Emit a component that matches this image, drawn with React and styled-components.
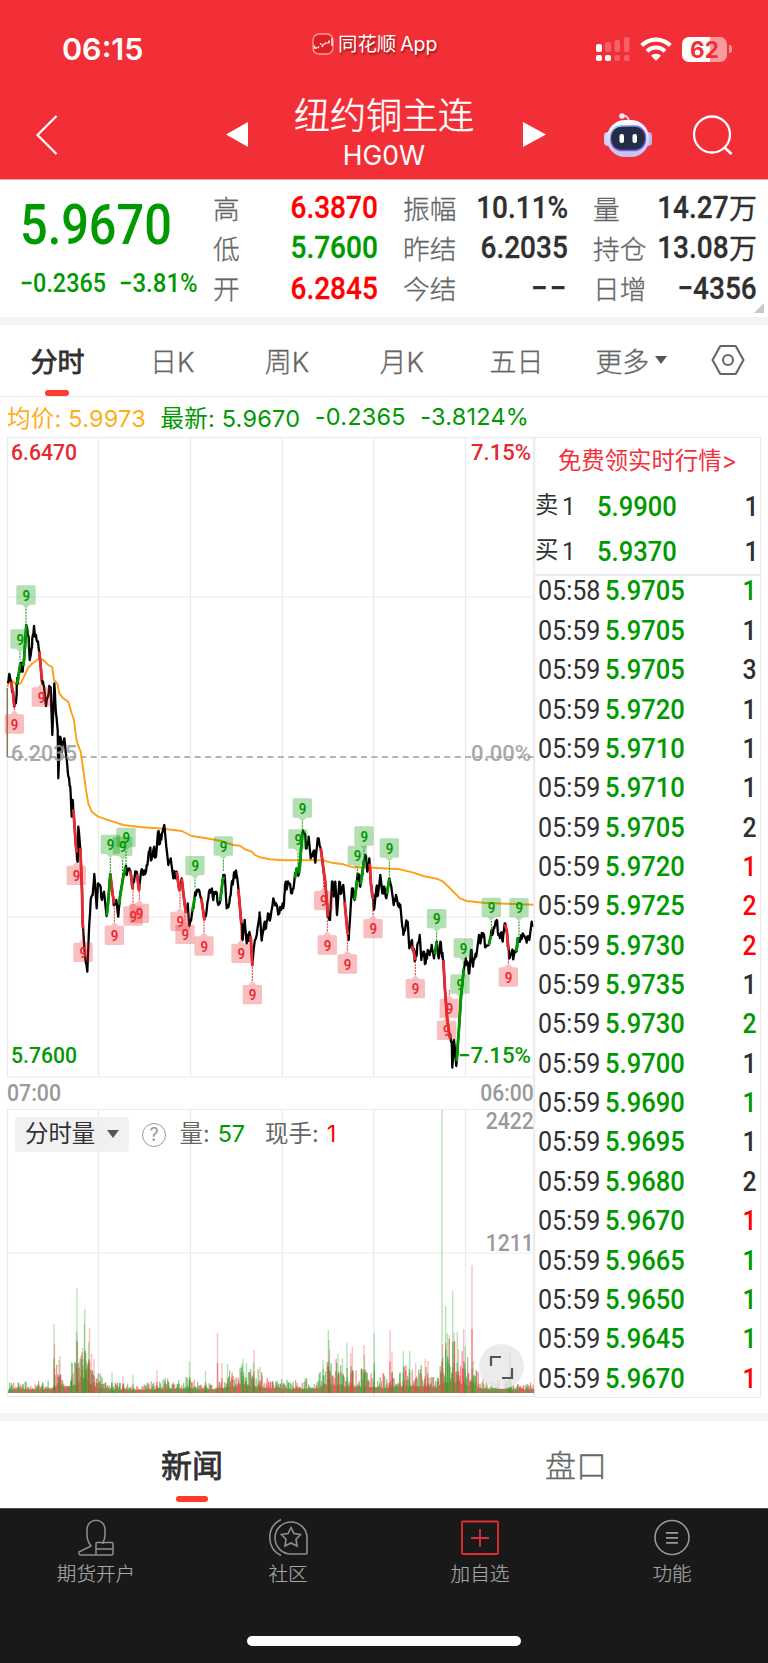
import React from "react";
import styled, { createGlobalStyle } from "styled-components";

const C = {
  red: "#f22f37",
  up: "#ff0000",
  down: "#009900",
  text: "#303030",
  label: "#666666",
  faint: "#999999",
  line: "#ebebeb",
  band: "#f4f4f4",
};

const Global = createGlobalStyle`
  * { box-sizing: border-box; }
  body { margin: 0; background: #fff; }
`;

const Page = styled.div`
  width: 768px;
  height: 1663px;
  overflow: hidden;
  display: flex;
  flex-direction: column;
  background: #fff;
  color: ${C.text};
  font-family: Inter, "Noto Sans CJK SC", sans-serif;
`;

const Num = styled.span`
  display: inline-block;
  font-family: Roboto, sans-serif;
  font-weight: ${(p) => p.$weight || 500};
  font-size: ${(p) => p.$size}px;
  letter-spacing: ${(p) => p.$ls || 0}px;
  line-height: 1;
  white-space: nowrap;
  color: ${(p) => p.$color || C.text};
  transform: scaleX(${(p) => p.$sx || 1});
  transform-origin: ${(p) => p.$origin || "left"} center;
`;

/* ---------- header ---------- */
const Header = styled.header`
  flex: none;
  height: 180px;
  background: ${C.red};
  border-bottom: 1px solid #fba9ac;
  color: #fff;
`;
const StatusBar = styled.div`
  height: 90px;
  display: flex;
  align-items: flex-start;
  padding: 30px 0 0 62px;
`;
const Clock = styled.div`
  width: 250px;
  font-size: 30.5px;
  line-height: 37px;
  font-weight: 600;
`;
const AppTag = styled.div`
  width: 284px;
  padding-top: 2px;
  display: flex;
  align-items: center;
  gap: 4px;
  font-size: 19.4px;
  word-spacing: -1.5px;
  line-height: 24px;
  text-shadow: 1px 2px 2px rgba(90, 0, 0, 0.6);
  white-space: nowrap;
`;
const StatusIcons = styled.div`
  display: flex;
  align-items: center;
  gap: 10px;
  height: 38px;
`;
const Battery = styled.div`
  position: relative;
  width: 45px;
  height: 25px;
  border-radius: 7px;
  background: linear-gradient(90deg, #fff 62%, #f99a9e 62%);
  color: ${C.red};
  font-size: 22.5px;
  font-weight: 700;
  line-height: 25px;
  text-align: center;
  &::after {
    content: "";
    position: absolute;
    right: -5px;
    top: 8px;
    width: 3px;
    height: 8px;
    border-radius: 0 3px 3px 0;
    background: #f99a9e;
  }
`;
const NavRow = styled.div`
  height: 89px;
  display: flex;
  align-items: center;
  svg { display: block; flex: none; }
`;
const NavSlot = styled.div`
  width: ${(p) => p.$w}px;
  padding-left: ${(p) => p.$pl || 0}px;
`;
const Title = styled.div`
  width: 236px;
  display: flex;
  flex-direction: column;
  align-items: center;
  font-family: "Noto Sans CJK SC", sans-serif;
  font-weight: 300;
  font-size: 36px;
  line-height: 44px;
  -webkit-text-stroke: 0.5px;
`;
const SubTitle = styled.div`
  font-family: Inter, sans-serif;
  font-size: 26.5px;
  font-weight: 400;
  line-height: 40px;
  padding-bottom: 3px;
  -webkit-text-stroke: 0;
`;

/* ---------- quote ---------- */
const Quote = styled.section`
  position: relative;
  flex: none;
  height: 137px;
  display: flex;
  padding: 7px 11px 0 0;
`;
const PriceBlock = styled.div`
  width: 213px;
  padding: 11px 0 0 20px;
`;
const BigPrice = styled.div`
  height: 73px;
`;
const Changes = styled.div`
  display: grid;
  grid-template-columns: 99px 1fr;
`;
const StatColumn = styled.div`
  width: ${(p) => p.$w}px;
  margin-right: ${(p) => p.$mr || 0}px;
`;
const Stat = styled.div`
  height: 40.3px;
  display: flex;
  align-items: center;
  justify-content: space-between;
  font-size: 26.7px;
  font-weight: 300;
  -webkit-text-stroke: 0.3px;
  color: ${C.label};
  white-space: nowrap;
`;
const StatValue = styled.span`
  display: flex;
  align-items: center;
  justify-content: flex-end;
  flex: 1;
  width: 0;
  color: ${C.text};
  font-size: 28px;
  font-weight: 400;
`;
const Corner = styled.i`
  position: absolute;
  right: 4px;
  bottom: 4px;
  border-left: 10px solid transparent;
  border-bottom: 10px solid #c8c8c8;
`;
const Band = styled.div`
  flex: none;
  height: 8px;
  background: ${C.band};
`;

/* ---------- period tabs ---------- */
const Tabs = styled.nav`
  flex: none;
  height: 72px;
  display: flex;
  border-bottom: 1px solid ${C.line};
`;
const Tab = styled.div`
  position: relative;
  width: ${(p) => p.$w || 114.8}px;
  display: flex;
  align-items: center;
  justify-content: center;
  gap: 6px;
  padding-bottom: 1px;
  font-size: 27px;
  font-weight: ${(p) => (p.$on ? 400 : 300)};
  -webkit-text-stroke: ${(p) => (p.$on ? "0.8px" : "0.3px")};
  color: ${(p) => (p.$on ? C.text : C.label)};
  &::after {
    content: "";
    display: ${(p) => (p.$on ? "block" : "none")};
    position: absolute;
    bottom: 0;
    width: 24px;
    height: 6px;
    border-radius: 3px;
    background: #ff3b30;
  }
`;
const Caret = styled.i`
  border: ${(p) => p.$s || 6}px solid transparent;
  border-top: 8px solid #555;
  border-bottom: 0;
`;
const Summary = styled.div`
  flex: none;
  height: 40px;
  display: flex;
  align-items: center;
  gap: 14.5px;
  padding: 0 0 1px 7px;
  font-size: 23.5px;
  letter-spacing: 0.22px;
  color: ${C.down};
  white-space: nowrap;
`;
const Avg = styled.span`
  color: #ffae1a;
`;

/* ---------- chart and ticks ---------- */
const Main = styled.section`
  flex: none;
  height: 976px;
  display: flex;
`;
const ChartBox = styled.div`
  position: relative;
  width: 535px;
  height: 961px;
  svg { display: block; overflow: visible; }
`;
const VolumeBar = styled.div`
  position: absolute;
  left: 15px;
  top: 680px;
  height: 35px;
  display: flex;
  align-items: center;
  font-size: 23.4px;
  line-height: 33px;
  color: ${C.label};
  white-space: nowrap;
`;
const Pill = styled.div`
  width: 114px;
  height: 35px;
  display: flex;
  align-items: center;
  gap: 12px;
  padding: 0 0 2px 10px;
  margin-right: 13px;
  border-radius: 4px;
  background: rgba(238, 238, 238, 0.85);
  color: ${C.text};
`;
const Help = styled.div`
  width: 24px;
  height: 24px;
  border: 1.5px solid ${C.faint};
  border-radius: 50%;
  font-size: 18px;
  line-height: 21px;
  text-align: center;
  color: ${C.faint};
  margin-right: 13.5px;
`;
const VolText = styled.span`
  display: flex;
  align-items: baseline;
  gap: 8px;
  margin-right: 20px;
  padding-bottom: 3px;
  b { font-weight: 400; color: ${(p) => p.$c}; }
`;
const Expand = styled.div`
  position: absolute;
  left: 479px;
  top: 907px;
  width: 45px;
  height: 45px;
  border-radius: 50%;
  background: rgba(232, 232, 232, 0.85);
`;
const Ticks = styled.aside`
  width: 226px;
  height: 961px;
  border: 1px solid ${C.line};
  border-left: 0;
`;
const Promo = styled.div`
  height: 46px;
  text-align: center;
  color: #f5303a;
  font-size: 23.4px;
  line-height: 46px;
`;
const Book = styled.div`
  height: 92px;
  padding-right: 1px;
  border-bottom: 2px solid ${C.line};
`;
const BookRow = styled.div`
  height: 45px;
  display: grid;
  grid-template-columns: 27px 35px 1fr auto;
  align-items: center;
  font-size: 23.4px;
  line-height: 32px;
`;
const Side = styled.span`
  padding-bottom: 3px;
`;
const TickList = styled.div`
  margin-top: -4.5px;
  padding-right: 3px;
`;
const TickRow = styled.div`
  height: 39.37px;
  display: grid;
  grid-template-columns: 66.5px 1fr auto;
  align-items: center;
  padding-left: 3px;
`;

/* ---------- bottom ---------- */
const NewsTabs = styled(Tabs)`
  height: 87px;
  border: 0;
`;
const NewsTab = styled(Tab)`
  width: 384px;
  padding-bottom: 3px;
  font-size: 31px;
  &::after { width: 32px; bottom: 6px; }
`;
const BottomNav = styled.footer`
  flex: none;
  height: 155px;
  border-top: 1px solid #4a4e4c;
  background: #191919;
  display: flex;
  flex-wrap: wrap;
  justify-content: center;
  align-content: flex-start;
`;
const NavItem = styled.div`
  width: 192px;
  height: 110px;
  padding-top: 8px;
  display: flex;
  flex-direction: column;
  align-items: center;
  font-size: 19.6px;
  font-weight: 300;
  -webkit-text-stroke: 0.2px;
  line-height: 30px;
  color: #a5a5a5;
  svg { display: block; margin-bottom: 2px; }
`;
const HomeBar = styled.div`
  width: 274px;
  height: 10px;
  margin-top: 17px;
  border-radius: 5px;
  background: #fff;
`;

/* ---------- chart data, sampled at three units per pixel ---------- */
const morning = "24,340 28,312 33,335 38,360 43,410 50,370 50,350 55,320 61,280 68,305 72,270 79,165 86,200 89,270 94,240 97,205 102,168 106,200 112,215 118,245 123,300 127,340 132,350 138,408 146,370 152,352 157,495 163,340 168,430 173,480 175,625 180,500 186,545 193,505 199,560 205,620 211,650 215,740 218,690 221,732 228,830 233,875 235,770 241,835 246,960 248,1060 253,1130 258,1180 262,1205 266,1100 272,990 278,975 283,912 290,1015 294,940 300,945 306,990 312,965 320,1038 325,990 331,912 338,975 343,1000 349,990 355,1040 360,980 368,930 376,895 382,905 388,895 392,910 398,955 404,920 410,905 417,960 423,905 430,915 438,905 444,870 450,835 454,870 460,840 468,860 474,785 480,820 486,790 493,765 499,830 505,885 512,865 520,925 530,905 538,960 545,925 552,985 557,1025 563,1000 568,1068 576,1030 583,990 590,960 598,962 604,985 613,1048 620,1020 627,965 634,960 640,990 648,965 655,1005 661,990 668,930 674,915 680,1015 688,1000 694,950 700,930 706,905 712,925 718,990 724,1060 728,1110 734,1050 740,1120 747,1090 752,1100 757,1185 762,1130 770,1095 778,1040";
const evening = "0,440 5,512 12,465 18,475 24,430 32,440 40,385 48,400 58,430 66,410 72,400 75,345 82,350 88,340 96,370 103,335 110,295 117,310 121,270 127,190 134,190 140,235 146,200 152,265 160,245 166,278 173,205 182,235 188,280 195,330 201,400 204,440 210,450 216,335 221,380 226,335 231,435 238,335 244,370 250,345 256,420 262,480 266,510 272,410 276,355 284,390 291,330 297,320 301,350 308,300 316,255 322,305 328,265 333,345 338,380 343,415 349,355 354,375 361,315 367,370 373,350 379,385 388,325 394,350 401,405 408,375 416,410 421,405 427,470 432,485 437,465 443,455 448,535 454,515 460,540 466,570 472,525 479,495 484,570 490,545 497,580 503,540 509,555 515,525 522,565 530,515 536,565 541,515 546,560 550,570 555,660 562,750 569,800 575,815 577,893 582,810 589,888 593,830 598,760 603,680 609,620 615,580 622,575 628,610 633,540 639,590 645,560 650,550 657,495 663,510 670,490 678,530 686,525 692,500 699,490 705,465 710,450 715,495 722,490 728,515 734,460 740,480 745,530 749,565 755,545 762,555 769,545 773,505 780,515 788,490 796,505 802,500 808,510 815,455 818,470";
const avgMorning = "22,350 30,325 40,335 50,345 62,340 72,320 85,292 100,278 118,265 130,270 145,285 157,292 162,330 172,340 178,370 190,385 205,395 215,430 222,450 228,500 232,520 242,545 250,600 258,660 265,700 275,725 295,740 330,752 370,765 420,771 490,776 545,783 575,798 610,803 660,812 700,825 720,827 735,838 755,845 765,855";
const avgEvening = "0,262 30,268 70,271 130,271 190,271 215,278 250,283 280,292 340,293 420,298 460,308 490,318 530,326 550,335 575,360 600,385 620,393 670,398 740,401 820,404";

const place = (str, dx, dy) =>
  str.split(" ").map((s) => {
    const [x, y] = s.split(",").map(Number);
    return [dx + x / 3, dy + y / 3];
  });
const A = [0, 570];
const B = [260, 770];

const random = (seed) => () => {
  seed = (seed * 16807) % 2147483647;
  return seed / 2147483647;
};

const rnd = random(77);
const raw = [...place(morning, ...A), ...place(evening, ...B)];
const price = [];
raw.forEach((p, i) => {
  price.push(p);
  const q = raw[i + 1];
  if (!q) return;
  const calm = Math.abs(q[1] - p[1]) > 18 ? 2 : 7;
  [0.33, 0.66].forEach((t, k) =>
    price.push([
      p[0] + (q[0] - p[0]) * t,
      p[1] + (q[1] - p[1]) * t + (k ? 1 : -1) * (rnd() - 0.2) * calm,
    ])
  );
});
const avg = [...place(avgMorning, ...A), ...place(avgEvening, ...B)];
const pts = (a) => a.map((p) => p[0].toFixed(1) + "," + p[1].toFixed(1)).join(" ");

const at = (x) => {
  for (let i = 1; i < raw.length; i++) {
    if (raw[i][0] >= x && raw[i][0] > raw[i - 1][0]) {
      const t = (x - raw[i - 1][0]) / (raw[i][0] - raw[i - 1][0]);
      return [x, raw[i - 1][1] + (raw[i][1] - raw[i - 1][1]) * t];
    }
  }
  return raw[raw.length - 1];
};
const span = ([dx], [a, b]) => {
  const x0 = dx + a / 3;
  const x1 = dx + b / 3;
  return [at(x0), ...raw.filter((p) => p[0] > x0 && p[0] < x1), at(x1)];
};
const falls = [
  ...[[33, 43], [118, 126], [220, 230], [241, 249], [331, 343], [390, 399], [411, 419], [530, 542], [545, 558], [604, 614], [715, 724], [751, 758]].map((r) => span(A, r)),
  ...[[182, 204], [254, 264], [329, 339], [457, 466], [550, 571], [735, 746]].map((r) => span(B, r)),
];
const rises = [
  ...[[51, 61], [70, 79], [320, 331], [358, 377], [577, 585], [660, 672]].map((r) => span(A, r)),
  ...[[105, 112], [117, 127], [284, 291], [302, 313], [381, 388], [524, 530], [590, 612], [686, 694], [769, 776]].map((r) => span(B, r)),
];

const pin = ([dx, dy], up) => ([x, y, tip]) => ({ x: dx + x / 3, y: dy + y / 3, tip: dy + tip / 3, up });
const pins = [
  ...[[78, 75, 165], [60, 207, 270], [331, 823, 912], [368, 829, 905], [378, 802, 890], [585, 887, 955], [670, 828, 905]].map(pin(A, true)),
  ...[[43, 462, 410], [124, 381, 300], [229, 916, 875], [249, 1147, 1060], [343, 1096, 1000], [399, 1038, 955], [418, 1030, 960], [540, 1054, 960], [555, 1093, 1025], [612, 1128, 1048], [723, 1150, 1060], [757, 1274, 1185]].map(pin(A, false)),
  ...[[127, 114, 188], [114, 207, 290], [312, 198, 260], [292, 256, 320], [388, 234, 325], [530, 446, 512], [610, 534, 600], [600, 642, 700], [694, 412, 500], [777, 413, 500]].map(pin(B, true)),
  ...[[191, 392, 300], [202, 525, 440], [262, 582, 480], [339, 476, 380], [466, 656, 570], [568, 715, 660], [560, 781, 700], [745, 621, 530]].map(pin(B, false)),
];

const envelope = [[8, 6], [30, 7], [53, 8], [56, 24], [65, 12], [72, 22], [80, 32], [90, 28], [96, 15], [110, 7], [140, 4], [150, 7], [165, 10], [180, 8], [190, 13], [200, 5], [215, 6], [230, 16], [245, 22], [260, 14], [290, 8], [300, 9], [315, 10], [330, 25], [345, 18], [365, 17], [380, 12], [400, 18], [420, 20], [435, 15], [447, 38], [460, 32], [475, 16], [485, 7], [500, 9], [512, 8], [520, 4], [534, 8]];
const spikes = [[54, 69, 1], [54.5, 49], [59, 33, 1], [60, 37], [71.5, 31, 1], [77, 105, 1], [76.5, 61, 1], [77.5, 51], [82.5, 45, 1], [84.8, 84, 1], [84.3, 69, 1], [86, 40, 1], [88.6, 51, 1], [89.5, 65], [91.5, 39], [94, 34], [101, 17, 1], [112, 21, 1], [123, 17], [133, 18, 1], [157, 23], [189.5, 32, 1], [205.5, 22, 1], [217.5, 60], [222, 30], [227.5, 29, 1], [243, 34, 1], [246.5, 30, 1], [254, 43], [253.5, 30, 1], [260, 26], [323, 33, 1], [328.3, 63, 1], [329, 53, 1], [329.6, 43], [338, 39, 1], [342.5, 35, 1], [347, 50, 1], [350.7, 40], [352.3, 46], [364, 48], [364.4, 38, 1], [374.3, 60, 1], [390, 63], [392, 41], [403.3, 42, 1], [409.7, 42, 1], [415.7, 30], [425.3, 34], [428, 32], [442, 283, 1], [442.5, 49], [445.7, 87, 1], [447.3, 60, 1], [449.3, 58, 1], [452.7, 102, 1], [454, 60], [457.3, 61, 1], [458.5, 44], [463.7, 64], [465.3, 47, 1], [472, 128], [473.3, 32, 1], [509.5, 40, 1], [510.5, 42, 1]];
const level = (x) => {
  for (let i = 1; i < envelope.length; i++) {
    const [a, h] = envelope[i - 1];
    const [b, k] = envelope[i];
    if (x <= b) return h + ((k - h) * (x - a)) / (b - a);
  }
  return 6;
};
const vr = random(4242);
const bars = [];
for (let x = 8; x < 533.5; x += 0.5) {
  bars.push({ x, h: 1.8 + level(x) * (0.24 + 1.2 * Math.pow(vr(), 2.4)), g: vr() > 0.48 });
}

const Marker = ({ m }) => {
  const color = m.up ? "#009900" : "#ea2a30";
  const edge = m.up ? m.y + 9.7 : m.y - 9.7;
  const d = m.up ? 4 : -4;
  return (
    <g>
      <line x1={m.x} x2={m.x} y1={edge + d} y2={m.tip} stroke={color} strokeWidth="1" strokeDasharray="2 1" />
      <g fill={color} fillOpacity=".3">
        <rect x={m.x - 9.7} y={m.y - 9.7} width="19.4" height="19.4" rx="1.5" />
        <path d={`M${m.x - 4} ${edge}L${m.x} ${edge + d}L${m.x + 4} ${edge}Z`} />
      </g>
      <text x={m.x - 3.6} y={m.y + 5.6} fontFamily="Roboto" fontWeight="600" fontSize="15.5" textLength="7.6" lengthAdjust="spacingAndGlyphs" fill={color}>9</text>
    </g>
  );
};

const AxisText = ({ x, y, w, end, fill, size = 22, weight = 500, children }) => (
  <text x={end ? x - w : x} y={y} textLength={w} lengthAdjust="spacingAndGlyphs" fontFamily="Roboto" fontWeight={weight} fontSize={size} fill={fill}>
    {children}
  </text>
);

const Chart = () => (
  <svg width="535" height="961" viewBox="0 437 535 961">
    <g stroke={C.line} strokeWidth="1.2" fill="none">
      {[98.5, 190.5, 282.3, 373.7, 465.5].map((x) => (
        <path key={x} d={`M${x} 437.6V1077M${x} 1109.5V1396.6`} />
      ))}
      <path d="M7.5 597H534M7.5 917H534M7.5 1253H534" />
      <path d="M7.5 437.6H534V1077H7.5ZM7.5 1109.5H534V1396.6H7.5Z" />
      <path d="M534.2 437V1397" strokeWidth="2" />
    </g>
    <path d="M7.5 757H534" stroke="#b4b4b4" strokeWidth="1.8" strokeDasharray="6 4.4" />
    <path d="M7.3 688V757" stroke="#8a7a55" strokeWidth="1.5" />
    <polyline points={pts(avg)} fill="none" stroke="#ff9f1a" strokeWidth="1.9" strokeLinejoin="round" />
    <polyline points={pts(price)} fill="none" stroke="#000" strokeWidth="2.3" strokeLinejoin="round" />
    {falls.map((s, i) => (
      <polyline key={i} points={pts(s)} fill="none" stroke="#ea2a30" strokeWidth="2.8" strokeLinejoin="round" />
    ))}
    {rises.map((s, i) => (
      <polyline key={i} points={pts(s)} fill="none" stroke="#009900" strokeWidth="2.8" strokeLinejoin="round" />
    ))}
    {pins.map((m, i) => <Marker key={i} m={m} />)}
    <AxisText x={11} y={459.5} w={66} fill="#e5282e">6.6470</AxisText>
    <AxisText x={531} y={459.5} w={60} end fill="#e5282e">7.15%</AxisText>
    <g opacity=".85">
      <AxisText x={11} y={761} w={66} fill={C.faint}>6.2035</AxisText>
      <AxisText x={531} y={761} w={60} end fill={C.faint}>0.00%</AxisText>
    </g>
    <AxisText x={11} y={1063} w={66} fill={C.down}>5.7600</AxisText>
    <AxisText x={531} y={1063} w={73} end fill={C.down}>−7.15%</AxisText>
    <AxisText x={7} y={1100.5} w={54} size={23} fill={C.faint}>07:00</AxisText>
    <AxisText x={533.8} y={1100.5} w={53.5} end size={23} fill={C.faint}>06:00</AxisText>
    {bars.map((b, i) => (
      <rect key={i} x={b.x} y={1393 - b.h} width="1.3" height={b.h} fill={b.g ? "#1a9e1a" : "#f0353b"} fillOpacity=".52" />
    ))}
    {spikes.map(([x, h, g], i) => (
      <g key={i} fill={g ? "#1fa51f" : "#f2383e"}>
        <rect x={x - 0.7} y={1393 - h} width="1.4" height={h} fillOpacity=".32" />
        <rect x={x - 0.7} y={1393 - h * 0.5} width="1.4" height={h > 200 ? 0 : h * 0.5} fillOpacity=".5" />
      </g>
    ))}
    <AxisText x={533.8} y={1129} w={48} end size={23} fill={C.faint}>2422</AxisText>
    <AxisText x={533.8} y={1251} w={48} end size={23} fill={C.faint}>1211</AxisText>
  </svg>
);

const Stats = ({ rows, w, mr }) => (
  <StatColumn $w={w} $mr={mr}>
    {rows.map(([label, value, color, unit]) => (
      <Stat key={label}>
        {label}
        <StatValue>
          <Num $size={32} $sx={value === "−−" ? 0.93 : 0.875} $ls={value === "−−" ? 2 : 0} $origin="right" $color={color}>{value}</Num>
          {unit}
        </StatValue>
      </Stat>
    ))}
  </StatColumn>
);

const ticks = [
  ["05:58", "5.9705", 1, "d"], ["05:59", "5.9705", 1], ["05:59", "5.9705", 3], ["05:59", "5.9720", 1],
  ["05:59", "5.9710", 1], ["05:59", "5.9710", 1], ["05:59", "5.9705", 2], ["05:59", "5.9720", 1, "u"],
  ["05:59", "5.9725", 2, "u"], ["05:59", "5.9730", 2, "u"], ["05:59", "5.9735", 1], ["05:59", "5.9730", 2, "d"],
  ["05:59", "5.9700", 1], ["05:59", "5.9690", 1, "d"], ["05:59", "5.9695", 1], ["05:59", "5.9680", 2],
  ["05:59", "5.9670", 1, "u"], ["05:59", "5.9665", 1, "d"], ["05:59", "5.9650", 1, "d"], ["05:59", "5.9645", 1, "d"],
  ["05:59", "5.9670", 1, "u"],
];
const tone = { d: C.down, u: C.up };

export default function App() {
  return (
    <Page>
      <Global />
      <Header>
        <StatusBar>
          <Clock>06:15</Clock>
          <AppTag>
            <svg width="22" height="22" viewBox="0 0 22 22">
              <rect x="1" y="1" width="20" height="20" rx="6" fill="#df2026" stroke="#ff9b9b" strokeWidth="1.3" />
              <path d="M2.5 12.5V15H5M5.8 15l1-1.5M8 10.5l1.5 1M10 14l1.5-3M12.5 11.5l1-2M14.5 10.5l1-1M17 7.5v3M20 5v8" stroke="#fff" strokeWidth="1.4" fill="none" />
            </svg>
            同花顺 App
          </AppTag>
          <StatusIcons>
            <svg width="34" height="26" viewBox="0 0 34 26" fill="#fff">
              <rect x="0" y="8" width="6" height="8" rx="2" />
              <rect x="0" y="19" width="6" height="6" rx="2" />
              <rect x="9" y="19" width="6" height="6" rx="2" />
              <g opacity=".24">
                <rect x="9" y="6" width="6" height="10" rx="2" />
                <rect x="18.5" y="4" width="5.5" height="12" rx="2" />
                <rect x="28" y="1" width="5.5" height="15" rx="2" />
                <rect x="18.5" y="19" width="5.5" height="6" rx="2" />
                <rect x="28" y="19" width="5.5" height="6" rx="2" />
              </g>
            </svg>
            <svg width="32" height="24" viewBox="0 0 32 24" fill="none" stroke="#fff" strokeWidth="4.2">
              <path d="M1.7 8.6a20.3 20.3 0 0 1 28.6 0" />
              <path d="M7 14.2a12.8 12.8 0 0 1 18 0" />
              <path d="M11 18.7a7.2 7.2 0 0 1 10 0L16 23.7z" fill="#fff" stroke="none" />
            </svg>
            <Battery>62</Battery>
          </StatusIcons>
        </StatusBar>
        <NavRow>
          <NavSlot $w={226} $pl={36}>
            <svg width="22" height="40" viewBox="0 0 22 40"><path d="M20.5 1L1.5 20L20.5 39" fill="none" stroke="#fff" strokeWidth="2.2" /></svg>
          </NavSlot>
          <NavSlot $w={40}>
            <svg width="22" height="25" viewBox="0 0 22 25"><path d="M0 12.5L22 0V25Z" fill="#fff" /></svg>
          </NavSlot>
          <Title>
            纽约铜主连
            <SubTitle>HG0W</SubTitle>
          </Title>
          <NavSlot $w={102} $pl={21}>
            <svg width="23" height="25" viewBox="0 0 23 25"><path d="M23 12.5L0 0V25Z" fill="#fff" /></svg>
          </NavSlot>
          <NavSlot $w={88}>
            <svg width="48" height="46" viewBox="0 0 48 46">
              <defs>
                <linearGradient id="shell" x1="0" y1="0" x2="0" y2="1">
                  <stop offset="0" stopColor="#fff" />
                  <stop offset="1" stopColor="#c3bdec" />
                </linearGradient>
                <linearGradient id="rim" x1="0" y1="0" x2="1" y2="1">
                  <stop offset="0" stopColor="#8fe0ec" />
                  <stop offset=".5" stopColor="#8a50e0" />
                  <stop offset="1" stopColor="#5a6af0" />
                </linearGradient>
              </defs>
              <path d="M18 4Q24 3 25 9" fill="none" stroke="#e6defa" strokeWidth="2" />
              <circle cx="18" cy="4" r="2.8" fill="#e8e6fb" />
              <rect x="0" y="20" width="8" height="14" rx="4" fill="#d0d2f5" />
              <rect x="40" y="20" width="8" height="14" rx="4" fill="#b9bdec" />
              <rect x="3" y="8" width="42" height="37" rx="18" fill="url(#shell)" />
              <rect x="6.5" y="14" width="35" height="24.5" rx="11" fill="#232d48" stroke="url(#rim)" strokeWidth="1.3" />
              <rect x="15.5" y="22" width="4.5" height="9" rx="2" fill="#fff" />
              <rect x="28.5" y="22" width="4.5" height="9" rx="2" fill="#fff" />
            </svg>
          </NavSlot>
          <svg width="42" height="42" viewBox="0 0 42 42" fill="none" stroke="#fff" strokeWidth="2.3">
            <circle cx="20" cy="20.5" r="18" />
            <path d="M32 33l7.5 7" strokeWidth="2.6" />
          </svg>
        </NavRow>
      </Header>

      <Quote>
        <PriceBlock>
          <BigPrice><Num $size={55} $sx={0.885} $color={C.down}>5.9670</Num></BigPrice>
          <Changes>
            <Num $size={25.5} $sx={0.915} $color={C.down}>−0.2365</Num>
            <Num $size={25.5} $sx={0.94} $color={C.down}>−3.81%</Num>
          </Changes>
        </PriceBlock>
        <Stats w={165} mr={25} rows={[["高", "6.3870", C.up], ["低", "5.7600", C.down], ["开", "6.2845", C.up]]} />
        <Stats w={165} mr={25} rows={[["振幅", "10.11%"], ["昨结", "6.2035"], ["今结", "−−"]]} />
        <Stats w={164} rows={[["量", "14.27", C.text, "万"], ["持仓", "13.08", C.text, "万"], ["日增", "−4356"]]} />
        <Corner />
      </Quote>
      <Band />
      <Tabs>
        <Tab $on>分时</Tab>
        <Tab>日K</Tab>
        <Tab>周K</Tab>
        <Tab>月K</Tab>
        <Tab>五日</Tab>
        <Tab>更多<Caret /></Tab>
        <Tab $w={78}>
          <svg width="34" height="32" viewBox="0 0 34 32" fill="none" stroke="#666" strokeWidth="2.1">
            <path d="M9.3 2H24.7L32.5 16L24.7 30H9.3L1.5 16Z" strokeLinejoin="round" />
            <circle cx="17" cy="16" r="5" />
          </svg>
        </Tab>
      </Tabs>
      <Summary>
        <Avg>均价: 5.9973</Avg>
        <span>最新: 5.9670</span>
        <span>-0.2365</span>
        <span>-3.8124%</span>
      </Summary>

      <Main>
        <ChartBox>
          <Chart />
          <VolumeBar>
            <Pill>分时量<Caret $s={6.5} /></Pill>
            <Help>?</Help>
            <VolText $c={C.down}>量: <b>57</b></VolText>
            <VolText $c={C.up}>现手: <b>1</b></VolText>
          </VolumeBar>
          <Expand>
            <svg width="45" height="45" viewBox="0 0 45 45" fill="none" stroke="#555" strokeWidth="2.2">
              <path d="M12 22V13H22M23 34H33V24" />
            </svg>
          </Expand>
        </ChartBox>
        <Ticks>
          <Promo>免费领实时行情&gt;</Promo>
          <Book>
            {[["卖", "5.9900"], ["买", "5.9370"]].map(([side, p]) => (
              <BookRow key={side}>
                <Side>{side}</Side>
                <Num $size={26.5} $weight={400} $sx={0.9}>1</Num>
                <Num $size={27.5} $sx={0.93} $color={C.down}>{p}</Num>
                <Num $size={27.5} $sx={0.9} $origin="right">1</Num>
              </BookRow>
            ))}
          </Book>
          <TickList>
            {ticks.map(([t, p, n, c], i) => (
              <TickRow key={i}>
                <Num $size={27.5} $weight={450} $sx={0.91}>{t}</Num>
                <Num $size={27.5} $sx={0.93} $color={C.down}>{p}</Num>
                <Num $size={27.5} $sx={0.9} $origin="right" $color={tone[c]}>{n}</Num>
              </TickRow>
            ))}
          </TickList>
        </Ticks>
      </Main>

      <Band />
      <NewsTabs>
        <NewsTab $on>新闻</NewsTab>
        <NewsTab>盘口</NewsTab>
      </NewsTabs>
      <BottomNav>
        <NavItem>
          <svg width="40" height="40" viewBox="0 0 40 40" fill="none" stroke="#8e8e8e" strokeWidth="1.5">
            <path d="M20 38H4Q3 38 3 36V35L15 29C12 25 11 22 11 18V13C11 0 29 0 29 13V18Q29 22 27 25" />
            <rect x="20" y="25.5" width="17" height="12.5" rx="1" />
            <path d="M20 32H37M27 25V27" />
          </svg>
          期货开户
        </NavItem>
        <NavItem>
          <svg width="40" height="40" viewBox="0 0 40 40" fill="none" stroke="#8e8e8e" strokeWidth="1.6">
            <path d="M13 2.5C-2 10 -2 31 13 38.5" />
            <path d="M39 36V21A16 16 0 1 0 23 37H38Q39 37 39 36Z" />
            <path d="M23 10.5L26 16.5L32.5 17.5L28 22.2L29 29L23 26L17 29L18 22.2L13.5 17.5L20 16.5Z" />
          </svg>
          社区
        </NavItem>
        <NavItem>
          <svg width="40" height="40" viewBox="0 0 40 40" fill="none" stroke="#e52d30" strokeWidth="1.8">
            <rect x="2" y="4.5" width="36" height="32.5" rx="1" />
            <path d="M20 12V30M11 21H29" />
          </svg>
          加自选
        </NavItem>
        <NavItem>
          <svg width="40" height="40" viewBox="0 0 40 40" fill="none" stroke="#999" strokeWidth="1.6">
            <circle cx="20" cy="20.5" r="17" />
            <path d="M14 15.8H26M14 20.8H26M14 25.8H26" strokeWidth="1.8" />
          </svg>
          功能
        </NavItem>
        <HomeBar />
      </BottomNav>
    </Page>
  );
}
